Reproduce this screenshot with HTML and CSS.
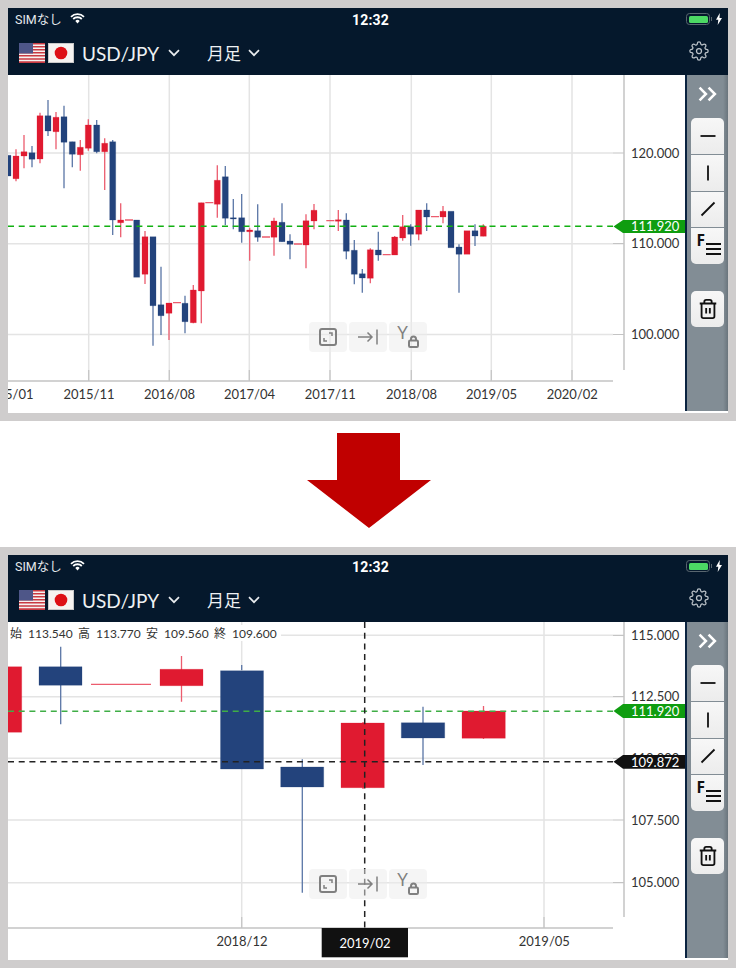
FILE: index.html
```html
<!DOCTYPE html>
<html lang="ja">
<head>
<meta charset="utf-8">
<title>USD/JPY チャート</title>
<link rel="stylesheet" href="styles.css">
</head>
<body>
<svg class="defs" aria-hidden="true">
  <symbol id="wifi" viewBox="0 0 15 11"><path class="wifi-arc" d="M1 3.8a9.4 9.4 0 0 1 13 0M3.2 6a6.2 6.2 0 0 1 8.6 0"/><path class="wifi-dot" d="M5.3 7.9a3.2 3.2 0 0 1 4.4 0L7.5 10.4z"/></symbol>
  <symbol id="chev" viewBox="0 0 12 8"><path class="chev-line" d="M1 1.2l5 5 5-5"/></symbol>
  <symbol id="gear" viewBox="0 0 24 24"><circle class="gear-line" cx="12" cy="12" r="3"/><path class="gear-line" d="M19.4 15a1.65 1.65 0 0 0 .33 1.82l.06.06a2 2 0 0 1 0 2.83 2 2 0 0 1-2.83 0l-.06-.06a1.65 1.65 0 0 0-1.82-.33 1.65 1.65 0 0 0-1 1.51V21a2 2 0 0 1-2 2 2 2 0 0 1-2-2v-.09A1.65 1.65 0 0 0 9 19.4a1.65 1.65 0 0 0-1.82.33l-.06.06a2 2 0 0 1-2.83 0 2 2 0 0 1 0-2.83l.06-.06a1.65 1.65 0 0 0 .33-1.82 1.65 1.65 0 0 0-1.51-1H3a2 2 0 0 1-2-2 2 2 0 0 1 2-2h.09A1.65 1.65 0 0 0 4.6 9a1.65 1.65 0 0 0-.33-1.82l-.06-.06a2 2 0 0 1 0-2.83 2 2 0 0 1 2.83 0l.06.06a1.65 1.65 0 0 0 1.82.33H9a1.65 1.65 0 0 0 1-1.51V3a2 2 0 0 1 2-2 2 2 0 0 1 2 2v.09a1.65 1.65 0 0 0 1 1.51 1.65 1.65 0 0 0 1.82-.33l.06-.06a2 2 0 0 1 2.83 0 2 2 0 0 1 0 2.83l-.06.06a1.65 1.65 0 0 0-.33 1.82V9a1.65 1.65 0 0 0 1.51 1H21a2 2 0 0 1 2 2 2 2 0 0 1-2 2h-.09a1.65 1.65 0 0 0-1.51 1z"/></symbol>
  <symbol id="flag-us" viewBox="0 0 26 20"><rect class="us-white" width="26" height="20"/><path class="us-red" d="M0 0h26v1.5H0zM0 3h26v1.5H0zM0 6h26v1.5H0zM0 9h26v1.5H0zM0 12.1h26v1.5H0zM0 15.2h26v1.5H0zM0 18.3h26V20H0z"/><rect class="us-blue" width="14" height="10.5"/></symbol>
  <symbol id="flag-jp" viewBox="0 0 26 20"><rect class="jp-white" x=".5" y=".5" width="25" height="19"/><circle class="jp-red" cx="13" cy="10" r="6.3"/></symbol>
  <symbol id="i-expand" viewBox="0 0 20 20"><rect class="ov-line" x="2" y="2" width="16" height="16" rx="2"/><path class="ov-thin" d="M11 6h3v3M6 11v3h3"/></symbol>
  <symbol id="i-end" viewBox="0 0 22 16"><path class="ov-thin" d="M1 8h14M10.5 3.5L15 8l-4.5 4.500M20 .5v15"/></symbol>
  <symbol id="i-lock" viewBox="0 0 11 13"><path class="ov-line" d="M3 5.5V4a2.5 2.5 0 0 1 5 0v1.500"/><rect class="ov-line" x="1" y="5.5" width="9" height="6.5" rx="1.2"/></symbol>
  <symbol id="i-dash" viewBox="0 0 24 24"><path class="tool-line" d="M4.500 12h15"/></symbol>
  <symbol id="i-vert" viewBox="0 0 24 24"><path class="tool-line" d="M12 4.500v15"/></symbol>
  <symbol id="i-slash" viewBox="0 0 24 24"><path class="tool-line" d="M5.500 18.500l13-13"/></symbol>
  <symbol id="i-lines" viewBox="0 0 15 12"><path class="tool-line" d="M0 1h15M0 6h15M0 11h15"/></symbol>
  <symbol id="i-trash" viewBox="0 0 24 24"><path class="trash-line" d="M3 6h18M19 6v14a2 2 0 0 1-2 2H7a2 2 0 0 1-2-2V6m3 0V4a2 2 0 0 1 2-2h4a2 2 0 0 1 2 2v2M10 11v6M14 11v6"/></symbol>
</svg>

<section class="shot">
  <div class="phone">
    <header class="top">
      <div class="status">
        <div class="status-left"><span>SIMなし</span><svg class="wifi"><use href="#wifi"/></svg></div>
        <div class="clock">12:32</div>
        <div class="status-right"><span class="battery"><span class="battery-fill"></span></span><span class="battery-nub"></span><svg class="bolt" viewBox="0 0 6 12"><path class="bolt-fill" d="M3.800 0L0 6.800h2.300L1.700 12 6 4.900H3.500z"/></svg></div>
      </div>
      <nav class="nav">
        <svg class="flag flag-first"><use href="#flag-us"/></svg>
        <svg class="flag"><use href="#flag-jp"/></svg>
        <span class="pair">USD/JPY</span>
        <svg class="chev chev-pair"><use href="#chev"/></svg>
        <span class="period">月足</span>
        <svg class="chev chev-period"><use href="#chev"/></svg>
        <svg class="gear"><use href="#gear"/></svg>
      </nav>
    </header>
    <div class="work">
      <div class="chart">
        <svg class="plot" viewBox="8 75 677 338" width="677" height="338">
          <path class="grid" d="M88.700 75V381M169.300 75V381M249.300 75V381M330 75V381M411.300 75V381M491.300 75V381M572 75V381M8 153H613M8 243.700H613M8 334.500H613"/>
          <path class="tick" d="M88.700 370V381M169.300 370V381M249.300 370V381M330 370V381M411.300 370V381M491.300 370V381M572 370V381M613 153H624M613 243.700H624M613 334.500H624"/>
          <path class="axis" d="M8 381H613M624 75V370"/>
          <path class="wick-blue" d="M32 146V167.300M48 100V136M64 105.700V188.300M72.300 141.700V167.300M96.700 120V153.300M112.700 140V235M153 305V345.700M161 266.700V335M185 295.700V333.300M225.300 166V225M233.300 199V229.300M241.700 194V242.700M257.700 204.300V241.700M282 203.300V241.700M290 234.300V259.300M346.300 213.300V259.300M354.300 240V284.300M362.300 269V292.700M378.300 231.700V260.700M410.700 224.300V245.700M426.700 203.300V231M459 244.300V292.700M475 224.300V246"/>
          <path class="wick-red" d="M16 149.300V181.300M24 135V168.300M40 112.700V163.300M56 112V149.300M80.300 140V170.700M88.300 119.300V150.700M104.700 138.300V190M120.700 203.300V237.300M145 231V284M169 303V340M193.300 285V323.300M201.300 202.700V323.300M217.300 165.300V217.700M249.700 227.700V260.700M274 217.700V255.700M306 214.300V268.300M314 204V229.300M338.300 210V231M370.300 248.300V283.300M394.700 236V255M402.700 215V240.700M418.700 210V240.300M443 206V223.300M483.300 224.300V236.300M125 220h8M173 302.700h8M205.300 202.700h8M262 237h8M294 244h8M326.300 220.700h8M382.700 254.700h8M431 216.700h8"/>
          <path class="body-blue" d="M5 155.300h6v20.700h-6zM29 152.700h6v6.600h-6zM45 115.700h6v15.300h-6zM61 116.700h6v25.600h-6zM69.300 141.700h6v12.600h-6zM93.700 125h6v26.700h-6zM109.700 141.700h6v78.300h-6zM133.700 220h6v57.300h-6zM150 236.700h6v69h-6zM158 304.700h6v11h-6zM182 303.300h6v18.400h-6zM222.300 176.700h6v41.600h-6zM230.300 217.700h6v1.300h-6zM238.700 217.700h6v14h-6zM254.700 230.700h6v6.600h-6zM279 222.300h6v19.400h-6zM287 241h6v3.300h-6zM343.300 220h6v31.300h-6zM351.300 250.300h6v24h-6zM359.300 273.700h6v4.300h-6zM375.300 250h6v5h-6zM407.700 226.700h6v7.600h-6zM423.700 210h6v7h-6zM448 211.300h6v36.400h-6zM456 247h6v7.300h-6zM472 230.700h6v5.300h-6z"/>
          <path class="body-red" d="M13 156h6v22.700h-6zM21 151.700h6v4.300h-6zM37 115.700h6v43.300h-6zM53 117.300h6v14.400h-6zM77.300 147.300h6v7.400h-6zM85.300 125h6v23.300h-6zM101.700 143.300h6v8.400h-6zM117.700 220h6v2.700h-6zM142 236.700h6v37.600h-6zM166 303h6v10.300h-6zM190.300 290h6v32.700h-6zM198.300 202.700h6v88.300h-6zM214.300 180.300h6v24h-6zM246.700 230h6v1.700h-6zM271 221h6v16.300h-6zM303 220.700h6v24.300h-6zM311 210.300h6v10.700h-6zM335.300 219.700h6v1.600h-6zM367.300 249.700h6v28.600h-6zM391.700 237h6v18h-6zM399.700 226.700h6v11.300h-6zM415.700 210h6v24.300h-6zM440 211.300h6v5.700h-6zM464 230.700h6v23.600h-6zM480.300 226.300h6v10h-6z"/>
          <path class="dash-green" d="M8 226.300H613"/>
          <g class="axis-text">
            <text x="631" y="157.500">120.000</text>
            <text x="631" y="248.200">110.000</text>
            <text x="631" y="339">100.000</text>
          </g>
          <path class="tag-green" d="M613.500 226.500L623 220H685V233H623z"/>
          <text class="tag-text" x="631" y="231">111.920</text>
          <g class="axis-text date">
            <text x="8" y="399">2015/01</text>
            <text x="89" y="399">2015/11</text>
            <text x="169.500" y="399">2016/08</text>
            <text x="249.500" y="399">2017/04</text>
            <text x="330.300" y="399">2017/11</text>
            <text x="411.500" y="399">2018/08</text>
            <text x="491.500" y="399">2019/05</text>
            <text x="572.300" y="399">2020/02</text>
          </g>
        </svg>
        <div class="overlay">
          <div class="ov-btn"><svg class="ov-expand"><use href="#i-expand"/></svg></div>
          <div class="ov-btn"><svg class="ov-end"><use href="#i-end"/></svg></div>
          <div class="ov-btn"><span class="ov-y">Y</span><svg class="ov-lock"><use href="#i-lock"/></svg></div>
        </div>
      </div>
      <aside class="side">
        <svg class="collapse" viewBox="0 0 18 15"><path class="collapse-line" d="M1.500 1.500l6 6-6 6M10 1.500l6 6-6 6"/></svg>
        <div class="tools">
          <button class="tool"><svg class="tool-ico"><use href="#i-dash"/></svg></button>
          <button class="tool"><svg class="tool-ico"><use href="#i-vert"/></svg></button>
          <button class="tool"><svg class="tool-ico"><use href="#i-slash"/></svg></button>
          <button class="tool tool-f"><span class="f-letter">F</span><svg class="f-lines"><use href="#i-lines"/></svg></button>
        </div>
        <button class="tool trash"><svg class="trash-ico"><use href="#i-trash"/></svg></button>
      </aside>
    </div>
  </div>
</section>

<div class="arrow-row">
  <svg class="arrow" viewBox="0 0 124 95" width="124" height="95"><path class="arrow-fill" d="M30 0H93V47H124L62 95L0 47H30z"/></svg>
</div>

<section class="shot">
  <div class="phone">
    <header class="top">
      <div class="status">
        <div class="status-left"><span>SIMなし</span><svg class="wifi"><use href="#wifi"/></svg></div>
        <div class="clock">12:32</div>
        <div class="status-right"><span class="battery"><span class="battery-fill"></span></span><span class="battery-nub"></span><svg class="bolt" viewBox="0 0 6 12"><path class="bolt-fill" d="M3.800 0L0 6.800h2.300L1.700 12 6 4.900H3.500z"/></svg></div>
      </div>
      <nav class="nav">
        <svg class="flag flag-first"><use href="#flag-us"/></svg>
        <svg class="flag"><use href="#flag-jp"/></svg>
        <span class="pair">USD/JPY</span>
        <svg class="chev chev-pair"><use href="#chev"/></svg>
        <span class="period">月足</span>
        <svg class="chev chev-period"><use href="#chev"/></svg>
        <svg class="gear"><use href="#gear"/></svg>
      </nav>
    </header>
    <div class="work">
      <div class="chart">
        <svg class="plot" viewBox="8 622 677 338" width="677" height="338">
          <path class="grid" d="M241.700 622V928M544 622V928M8 635.300H613M8 696.700H613M8 758.300H613M8 820H613M8 882.700H613"/>
          <path class="tick" d="M241.700 917V928M544 917V928M613 635.300H624M613 696.700H624M613 758.300H624M613 820H624M613 882.700H624"/>
          <path class="axis" d="M8 928H613M624 622V917"/>
          <rect class="ohlc-bg" x="8" y="625" width="273" height="16"/>
          <text class="ohlc"><tspan x="10" y="638">始</tspan><tspan x="28" y="638">113.540</tspan><tspan x="78" y="638">高</tspan><tspan x="96" y="638">113.770</tspan><tspan x="146" y="638">安</tspan><tspan x="164" y="638">109.560</tspan><tspan x="214" y="638">終</tspan><tspan x="232" y="638">109.600</tspan></text>
          <path class="wick-blue" d="M60.700 646.700V724.300M241.700 665V670M302.300 759.300V892.700M423 706.700V765"/>
          <path class="wick-red" d="M181.500 656V701.700M363 722V789M483.500 706V739M91 684.300H151"/>
          <path class="body-blue" d="M39 666.700h43v18.600h-43zM220.500 670.700h43v98.300h-43zM280.700 767h43v20h-43zM401.300 722.700h43.400v15.300h-43.400z"/>
          <path class="body-red" d="M0 666.700h21.700v65.600H0zM160 669.300h43v16.400h-43zM341 723h43.300v64.700H341zM462 711h43.300v27.300H462z"/>
          <path class="dash-green dash-soft" d="M8 711.200H613"/>
          <path class="dash-black" d="M8 761.700H613"/>
          <path class="dash-black" d="M364.700 622V928"/>
          <g class="axis-text">
            <text x="631" y="639.800">115.000</text>
            <text x="631" y="701.200">112.500</text>
            <text x="631" y="762.800">110.000</text>
            <text x="631" y="824.500">107.500</text>
            <text x="631" y="887.200">105.000</text>
          </g>
          <path class="tag-green" d="M613.500 711L623 704H685V718H623z"/>
          <text class="tag-text" x="631" y="715.800">111.920</text>
          <path class="tag-black" d="M613.500 761.700L623 755H685V768.700H623z"/>
          <text class="tag-text" x="631" y="766.500">109.872</text>
          <g class="axis-text date">
            <text x="242" y="945.500">2018/12</text>
            <text x="544.300" y="945.500">2019/05</text>
          </g>
          <rect class="tag-black" x="321.700" y="928" width="86.300" height="29.300"/>
          <text class="tag-text date" x="365" y="947.500">2019/02</text>
        </svg>
        <div class="overlay">
          <div class="ov-btn"><svg class="ov-expand"><use href="#i-expand"/></svg></div>
          <div class="ov-btn"><svg class="ov-end"><use href="#i-end"/></svg></div>
          <div class="ov-btn"><span class="ov-y">Y</span><svg class="ov-lock"><use href="#i-lock"/></svg></div>
        </div>
      </div>
      <aside class="side">
        <svg class="collapse" viewBox="0 0 18 15"><path class="collapse-line" d="M1.500 1.500l6 6-6 6M10 1.500l6 6-6 6"/></svg>
        <div class="tools">
          <button class="tool"><svg class="tool-ico"><use href="#i-dash"/></svg></button>
          <button class="tool"><svg class="tool-ico"><use href="#i-vert"/></svg></button>
          <button class="tool"><svg class="tool-ico"><use href="#i-slash"/></svg></button>
          <button class="tool tool-f"><span class="f-letter">F</span><svg class="f-lines"><use href="#i-lines"/></svg></button>
        </div>
        <button class="tool trash"><svg class="trash-ico"><use href="#i-trash"/></svg></button>
      </aside>
    </div>
  </div>
</section>
</body>
</html>
```

FILE: styles.css
```css
* { box-sizing: border-box; }
html, body { margin: 0; padding: 0; background: #fff; }
body { font-family: Lato, "Noto Sans CJK JP", sans-serif; overflow: hidden; }
.defs { display: none; }

.shot { height: 421px; padding: 8px; background: #cfcdcd; }
.phone { height: 405px; display: flex; flex-direction: column; background: #fff; }
.top { height: 67px; flex: none; background: #05182c; color: #fff; }

.status { height: 24px; display: grid; grid-template-columns: 1fr auto 1fr; align-items: center; padding: 0 6px 2px 7px; font-size: 12px; }
.status-left { display: flex; align-items: center; gap: 8px; margin-top: -2px; color: #e6e9ec; font-family: Roboto, "Noto Sans CJK JP", sans-serif; font-size: 12.5px; }
.clock { font-family: Roboto, sans-serif; font-weight: 700; font-size: 14px; letter-spacing: .2px; padding: 2px 0 0 4px; }
.status-right { display: flex; align-items: center; justify-content: flex-end; }
.wifi { width: 15px; height: 11px; }
.wifi-arc { fill: none; stroke: #fff; stroke-width: 1.8; }
.wifi-dot { fill: #fff; }
.battery { width: 24px; height: 12px; padding: 1.5px; border: 1px solid #59666f; border-radius: 3.5px; display: block; }
.battery-fill { display: block; height: 100%; background: #4cd964; border-radius: 1.5px; }
.battery-nub { width: 1px; height: 4px; margin: 0 4px 0 1px; background: #59666f; }
.bolt { width: 6px; height: 12px; }
.bolt-fill { fill: #fff; }

.nav { height: 43px; display: flex; align-items: center; padding: 0 20px 1px 11px; }
.flag { width: 26px; height: 20px; flex: none; margin-left: 3px; }
.flag-first { margin-left: 0; }
.us-white, .jp-white { fill: #f6f3f1; }
.us-red { fill: #c93a42; }
.us-blue { fill: #4e5688; }
.jp-white { stroke: #c9c9c9; stroke-width: 1; }
.jp-red { fill: #dd1016; }
.pair { margin-left: 8px; font-size: 19px; color: #eef1f3; }
.period { margin: 0 0 2px 27px; font-size: 17px; color: #eef1f3; }
.chev { width: 12px; height: 8px; }
.chev-pair { margin-left: 9px; }
.chev-period { margin-left: 7px; }
.chev-line { fill: none; stroke: #e8ebee; stroke-width: 1.7; }
.gear { width: 20px; height: 20px; margin: 0 -1px 4px auto; }
.gear-line { fill: none; stroke: #bcc3c9; stroke-width: 1.5; }

.work { flex: 1; display: flex; min-height: 0; }
.chart { position: relative; width: 677px; flex: none; }
.plot { display: block; overflow: hidden; }
.grid { fill: none; stroke: #e4e4e4; stroke-width: 1.5; }
.tick { fill: none; stroke: #c4c4c4; stroke-width: 1.2; }
.axis { fill: none; stroke: #c4c4c4; stroke-width: 1.5; }
.wick-blue { fill: none; stroke: #5a76a6; stroke-width: 1.3; }
.wick-red { fill: none; stroke: #ec5c6e; stroke-width: 1.3; }
.body-blue { fill: #23437c; stroke: rgba(35, 67, 124, .25); stroke-width: 1; }
.body-red { fill: #e01a30; stroke: rgba(224, 26, 48, .25); stroke-width: 1; }
.dash-green { fill: none; stroke: #12b012; stroke-width: 1.6; stroke-dasharray: 6 4.7; }
.dash-soft { stroke: #3fae46; }
.dash-black { fill: none; stroke: #222; stroke-width: 1.5; stroke-dasharray: 6 4.7; }
.axis-text text { font-family: Lato, sans-serif; font-size: 13px; fill: #333; }
.axis-text.date text { text-anchor: middle; }
.tag-green { fill: #0f9d10; }
.tag-black { fill: #111; }
.tag-text { font-family: Lato, sans-serif; font-size: 13px; fill: #fff; }
.tag-text.date { text-anchor: middle; }
.ohlc-bg { fill: #fff; }
.ohlc { font-family: Lato, "Noto Sans CJK JP", sans-serif; font-size: 12px; fill: #333; }

.overlay { position: absolute; left: 301px; top: 247px; display: flex; gap: 2px; }
.ov-btn { width: 38px; height: 30px; display: flex; align-items: center; justify-content: center; background: rgba(236, 236, 236, .5); border-radius: 4px; }
.ov-expand { width: 20px; height: 20px; }
.ov-end { width: 22px; height: 16px; }
.ov-line { fill: none; stroke: #808080; stroke-width: 2; }
.ov-thin { fill: none; stroke: #808080; stroke-width: 1.5; }
.ov-y { align-self: flex-start; font-size: 17px; line-height: 16px; margin: 3px 0 0 0; color: #808080; }
.ov-lock { width: 11px; height: 13px; margin-top: 8px; }

.side { width: 43px; height: 336px; flex: none; display: flex; flex-direction: column; align-items: flex-start; padding-left: 4px; border-left: 2px solid #0a2340; background: linear-gradient(90deg, #828d95 0, #828d95 88%, #6a757d 100%); }
.collapse { width: 19px; height: 16px; margin: 11px 0 16px 7px; flex: none; }
.collapse-line { fill: none; stroke: #fff; stroke-width: 2.4; }
.tools { display: flex; flex-direction: column; gap: 1px; }
.tool { width: 33px; height: 35.75px; padding: 0; border: 0; display: flex; align-items: center; justify-content: center; background: linear-gradient(180deg, #f7f7f7, #ececec); }
.tools .tool:first-child { border-radius: 5px 5px 0 0; }
.tools .tool:last-child { border-radius: 0 0 5px 5px; }
.tool-ico { width: 24px; height: 24px; }
.tool-line { fill: none; stroke: #111; stroke-width: 1.8; }
.tool-f { position: relative; }
.f-letter { position: absolute; left: 5.5px; top: 4px; font-family: "Open Sans", sans-serif; font-weight: 700; font-size: 15.5px; line-height: 16px; color: #111; }
.f-lines { position: absolute; left: 14.5px; top: 15px; width: 15px; height: 12px; }
.trash { height: 36px; margin-top: 27px; border-radius: 5px; }
.trash-ico { width: 22px; height: 22px; }
.trash-line { fill: none; stroke: #111; stroke-width: 2; }

.arrow-row { height: 126px; display: flex; justify-content: center; padding: 12px 0 0 1px; }
.arrow-fill { fill: #c00000; }
```
